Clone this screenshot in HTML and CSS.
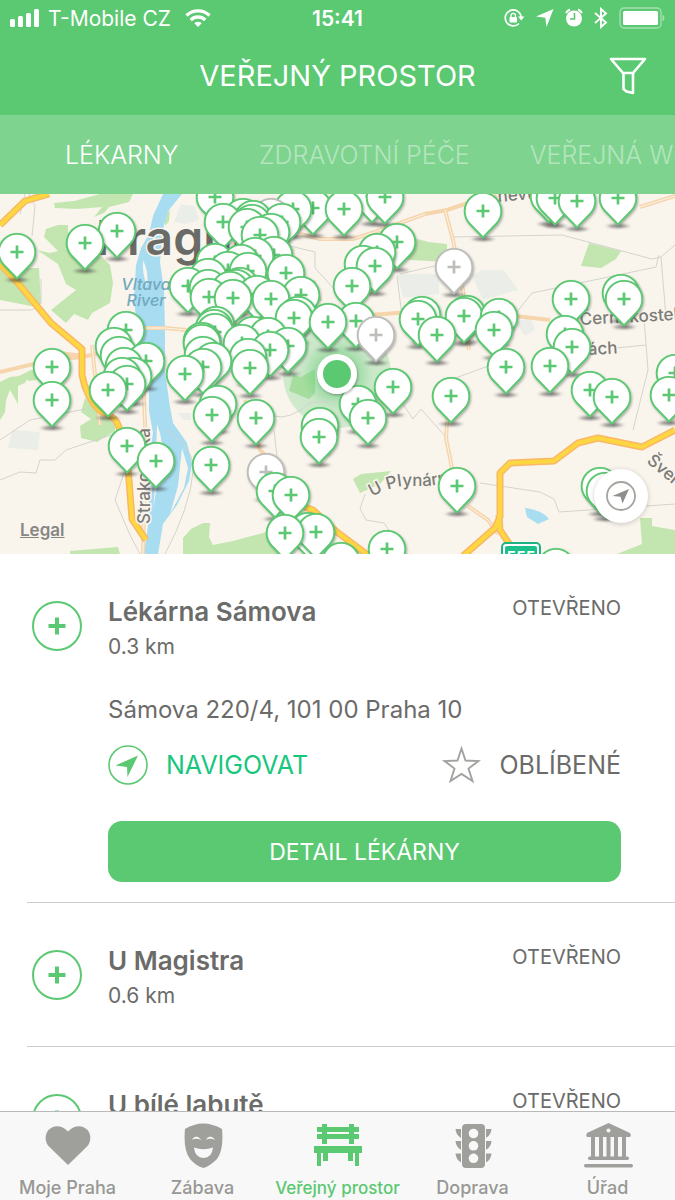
FILE: index.html
```html
<!DOCTYPE html>
<html lang="cs">
<head>
    <meta charset="UTF-8">
    <meta name="viewport" content="width=device-width, initial-scale=1.0">
    <link rel="stylesheet" href="styles.css">
    <title>Veřejný prostor</title>
</head>
<body>
    <header class="header">
        <div class="status">
            <div class="status-left">
                <svg width="30" height="20" viewBox="0 0 30 20" fill="#fff">
                    <rect x="0" y="11" width="5" height="8" rx="1.5"/>
                    <rect x="8" y="8" width="5" height="11" rx="1.5"/>
                    <rect x="16" y="5" width="5" height="14" rx="1.5"/>
                    <rect x="24" y="1" width="5" height="18" rx="1.5"/>
                </svg>
                <span>T-Mobile CZ</span>
                <svg class="wifi" width="26" height="20" viewBox="0 0 26 20" fill="none" stroke="#fff" stroke-width="3.4">
                    <path d="M1.500 7.500a16.500 16.500 0 0 1 23 0"/>
                    <path d="M5.700 12a10.500 10.500 0 0 1 14.600 0"/>
                    <path d="M13 19l-3.700-3.800a5.400 5.400 0 0 1 7.400 0z" fill="#fff" stroke="none"/>
                </svg>
            </div>
            <b class="time">15:41</b>
            <div class="status-right">
                <svg width="22" height="20" viewBox="0 0 22 20">
                    <path d="M16 15.500a8 8 0 1 1 2.200-6.500" fill="none" stroke="#fff" stroke-width="1.700"/>
                    <path d="M15 8.500h6.500l-3.300 4z" fill="#fff"/>
                    <rect x="6.500" y="9" width="7.500" height="5.500" rx="0.800" fill="#fff"/>
                    <path d="M8 9.500v-2a2.200 2.200 0 0 1 4.400 0v2" fill="none" stroke="#fff" stroke-width="1.300"/>
                </svg>
                <svg width="18" height="20" viewBox="0 0 18 20" fill="#fff"><path d="M17.500 1L10.500 19L9.300 9.700L0 8.500z"/></svg>
                <svg width="18" height="20" viewBox="0 0 18 20">
                    <circle cx="9" cy="10.500" r="8" fill="#fff"/>
                    <path d="M9.500 5v6H5" fill="none" stroke="#5bc872" stroke-width="1.600"/>
                    <path d="M1 5a9 9 0 0 1 4-3.500M13 1.500a9 9 0 0 1 4 3.500" fill="none" stroke="#fff" stroke-width="2"/>
                </svg>
                <svg width="14" height="22" viewBox="0 0 14 22" fill="none" stroke="#fff" stroke-width="1.900"><path d="M1 6l11 9.500l-5 4.500V2l5 4.500L1 16"/></svg>
                <svg width="46" height="22" viewBox="0 0 46 22">
                    <rect x="1" y="1" width="41" height="20" rx="4" fill="none" stroke="#a6e0b2" stroke-width="1.300"/>
                    <rect x="4" y="4" width="35" height="14" rx="1.500" fill="#fff"/>
                    <path d="M43.500 7.500v7q2-1 2-3.500t-2-3.500z" fill="#a6e0b2"/>
                </svg>
            </div>
        </div>
        <div class="title-bar">
            <h1 class="title">VEŘEJNÝ PROSTOR</h1>
            <button class="filter" aria-label="Filtr">
                <svg width="38" height="38" viewBox="0 0 38 38" fill="none" stroke="#fff" stroke-width="2.600" stroke-linejoin="round">
                    <path d="M2 2h34L24 16H14z"/>
                    <path d="M14.500 16v16l3 2.500l6.500 1.500V16"/>
                </svg>
            </button>
        </div>
    </header>

    <nav class="tabs">
        <a href="#" class="tab active">LÉKARNY</a>
        <a href="#" class="tab">ZDRAVOTNÍ PÉČE</a>
        <a href="#" class="tab">VEŘEJNÁ WC</a>
    </nav>

    <main class="content">
        <section class="map">
            <svg class="map-canvas" viewBox="0 194 675 360" preserveAspectRatio="xMidYMid slice">
                <defs>
                    <filter id="soft" x="-50%" y="-150%" width="200%" height="400%"><feGaussianBlur stdDeviation="2.400 1"/></filter>
                    <filter id="drop" x="-30%" y="-30%" width="160%" height="160%"><feDropShadow dx="1" dy="1.500" stdDeviation="1" flood-color="#555" flood-opacity="0.450"/></filter>
                    <radialGradient id="halo">
                        <stop offset="0.350" stop-color="#5bc872" stop-opacity="0.600"/>
                        <stop offset="0.650" stop-color="#5bc872" stop-opacity="0.300"/>
                        <stop offset="1" stop-color="#5bc872" stop-opacity="0.250"/>
                    </radialGradient>
                    <g id="pin">
                        <ellipse cx="0" cy="28" rx="10" ry="2.200" fill="#444" opacity="0.550" filter="url(#soft)"/>
                        <path d="M0 26.500L-13.500 12.500A18.300 18.300 0 1 1 13.500 12.500Z" fill="#fff" stroke="currentColor" stroke-width="1.900" filter="url(#drop)"/>
                        <path d="M-6.500 0H6.500M0-6.500V6.500" stroke="currentColor" stroke-width="2.700"/>
                    </g>
                    <path id="plynarni" d="M372 497Q392 485 412 486T450 482"/>
                </defs>

                <rect y="194" width="675" height="360" fill="#f9f5ed"/>

                <!-- parks -->
                <g fill="#c3e6b0">
                    <path d="M54 203l20-2l26-7h33l-4 8l-20 5l-5 6l-10 4l8-10l-25 2l-22-1z"/>
                    <path d="M37 250l13 3l8-2l-6-6l-8-8l2-8l12-4h10v8l30 20l12 12l3 18l-3 20l-18 10l-4 7l-14-6l-8 9l-15-13l25-20l-10-6l-8-20z"/>
                    <path d="M0 260l22 8h17l2 36l-10 2l-31-6z"/>
                    <path d="M165 216l5-7l-1 12l-4 5z"/>
                    <path d="M0 382l10-5l19-2l-4 8l-7 3v18l-8-14l-4 10l-1 12l-5 8z"/>
                    <path d="M19 376l12-6h18v8l-20 3z"/>
                    <path d="M85 398l18 15l12 8v10l-18 11l-16-4l-1-12l11-7l-10-7z"/>
                    <path d="M183 538l8-9l12-6h7l-1 14l4 8l20-4l30-8l24-10l5 31h-109z"/>
                    <path d="M70 551l48-4l2 7h-50z"/>
                    <path d="M293 375l8 2l14-8v24l-6 6l-20-8z"/>
                    <path d="M392 248l26-9l10 3l19 2v18l-36-2l-20-2z"/>
                    <path d="M589 243l32 8l-5 8l-15 9l-20-2z"/>
                    <path d="M353 479l8-5l30-3l-11 13l-20 9z"/>
                    <path d="M617 554l25-10l-2-26h12v8l23 4v24z"/>
                    <path d="M295 284l20-4l7 20l-20 13z"/>
                </g>
                <!-- built-up blocks -->
                <g fill="#ebeee8">
                    <path d="M174 222l7-18l14 2l4 14l-13 4z"/>
                    <path d="M8 448l4-18l28 2l-2 18z"/>
                    <path d="M397 274h42v20l-36 4z"/>
                    <path d="M472 276l10-6l22 0l14 20l-35 10z"/>
                    <path d="M178 413h13v7h-8z"/>
                    <path d="M515 322l16-4l4 12l-10 6z"/>
                </g>

                <circle cx="337" cy="374" r="54" fill="url(#halo)"/>

                <!-- Vltava -->
                <path fill="#a7dcf1" d="M163 194h19l-14 17l-5 18l-3 33l4 28l1 40v42l5 35l3 16l14 20l5 20l-3 18l-12 24l-14 19l-5 30h-14l4-28l1-26l-3-25l7-42l-4-22v-40l-10-30l-5-40l2-36l5-17l8-14l4-18z"/>
                <path fill="#f9f5ed" d="M143 260q6 12 4 26q-5-12-4-26zM157 424q8 20 4 40t-8 46q3-32 3-45t1-41z"/>
                <path fill="#f9f5ed" d="M182 448l6 20l-4 20l-14 26l8-28z"/>
                <path fill="#a7dcf1" d="M525 508q17 2 24 11l-11 5l-11-7z"/>

                <!-- tracks and district borders -->
                <g fill="none" stroke="#d4d3cd" stroke-width="1">
                    <path d="M20 214l5-20M32 236l3-30l-6-12M0 310h32l9-7v-24"/>
                    <path d="M0 440l30-20l30-6l25-5M0 480l20-8l16 1l4-13h15l11-10l45-15"/>
                    <path d="M125 470l-10 30l15 35l10 19M166 430q30 20 27 42q-3 35-28 82"/>
                    <path d="M290 246l25 6v16l42 46M274 416q15 5 37-14h40M274 430l4 36M450 237l112-2l90 24l9-2l14-12"/>
                    <path d="M512 318l20-25l124-26l3-12M661 257l5 60M644 318l4 52l-15 60M450 380l60-22M616 348l30-3"/>
                    <path d="M480 483l60 9l14 7l5 13l116-8M365 494l-5 15l6 11l18 3l10 14M403 404l10 15l8-10l24 27"/>
                    <path d="M397 276l5 40M400 274l60-14M340 194l-15 10"/>
                </g>
                <!-- streets -->
                <g fill="none" stroke="#f7d5ac" stroke-width="4">
                    <path d="M0 372l50-12l32-3l20-4M50 352l34 4M92 345l8 80M140 328h25l22 2"/>
                    <path d="M143 380l3 64l-3 110M300 234l20 5h33l22-7l50-18l22-4l18-6l40-10M445 210l8 30l10 50l6 60M370 315l68-5M515 316l35 4"/>
                    <path d="M448 410l-2 28l6 30M468 506l20 14l10 14M245 400l15 50l12 12M640 207l35-11"/>
                </g>
                <g fill="none" stroke="#f9f5ed" stroke-width="1">
                    <path d="M143 380l3 64l-3 110M300 234l20 5h33l22-7l50-18M445 210l8 30l10 50l6 60M448 410l-2 28l6 30M468 506l20 14l10 14M92 345l8 80M140 328h25l22 2M640 207l35-11"/>
                </g>
                <!-- motorways -->
                <g fill="none" stroke-linejoin="round">
                    <path stroke="#fab765" stroke-width="7" d="M0 225l25-24l24-7M0 264l17 18l34 41l31 26v26q4 22 18 36q16 6 18 14q9 18 10 42l4 52l14 21M285 500l28 10l24 22l32 24M675 430L642 447L598 438L578 443L554 461L510 463L500 473V517L495 528L463 556M499 515L500 530L512 548"/>
                    <path stroke="#fdd742" stroke-width="4" d="M0 225l25-24l24-7M0 264l17 18l34 41l31 26v26q4 22 18 36q16 6 18 14q9 18 10 42l4 52l14 21M285 500l28 10l24 22l32 24M675 430L642 447L598 438L578 443L554 461L510 463L500 473V517L495 528L463 556M499 515L500 530L512 548"/>
                </g>

                <g class="map-label">
                    <text class="city" x="96" y="255">Prague</text>
                    <text class="water" x="146" y="290">Vltava</text>
                    <text class="water" x="146" y="306">River</text>
                    <text x="498" y="202" transform="rotate(-5 498 202)">nevu</text>
                    <text x="580" y="325" transform="rotate(-3 580 325)">Černokostelecká</text>
                    <text x="588" y="355" transform="rotate(-3 588 355)">ách</text>
                    <text x="150" y="524" transform="rotate(-90 150 524)">Strakonická</text>
                    <text x="646" y="462" transform="rotate(40 646 462)">Švehlova</text>
                    <text><textPath href="#plynarni">U Plynární</textPath></text>
                </g>

                <rect x="502" y="543" width="38" height="26" rx="4" fill="#fff" stroke="#1db384" stroke-width="2"/>
                <rect x="505" y="546" width="32" height="24" rx="2" fill="#1cc08b"/>
                <text class="road-no" x="521" y="562">555</text>

                <g id="pins"></g>

                <circle cx="337" cy="374" r="20" fill="#fff" filter="url(#drop)"/>
                <circle cx="337" cy="374" r="14" fill="#5bc872"/>
            </svg>
            <a href="#" class="legal">Legal</a>
            <button class="locate" aria-label="Moje poloha">
                <svg width="30" height="30" viewBox="0 0 30 30">
                    <circle cx="15" cy="15" r="14" fill="none" stroke="#a3a39f" stroke-width="1.800"/>
                    <path d="M23 8L16.500 22.500L14.500 15.800L6.500 15z" fill="#8e8e8a"/>
                </svg>
            </button>
        </section>

        <ul class="list">
            <li class="item open">
                <svg class="item-icon" width="50" height="50" viewBox="0 0 50 50"><circle cx="25" cy="25" r="24"/><path d="M16.500 25h17M25 16.500v17"/></svg>
                <div class="item-body">
                    <div class="item-head">
                        <h2 class="name">Lékárna Sámova</h2>
                        <span class="state">OTEVŘENO</span>
                    </div>
                    <p class="distance">0.3 km</p>
                    <p class="address">Sámova 220/4, 101 00 Praha 10</p>
                    <div class="actions">
                        <button class="action navigate">
                            <svg width="40" height="40" viewBox="0 0 40 40">
                                <circle cx="20" cy="20" r="19" fill="none" stroke="#5bc872" stroke-width="1.600"/>
                                <path d="M30 10.500L19.500 32L19 22L7.500 20.500z" fill="#5bc872"/>
                            </svg>
                            NAVIGOVAT
                        </button>
                        <button class="action">
                            <svg width="40" height="40" viewBox="0 0 40 40" fill="none" stroke="#a2a29e" stroke-width="1.900">
                                <path d="M20.500 3.500L24.500 15.500L37.500 16L27.500 23.500L31.500 36L20.500 29L9.500 36L13.500 23.500L3.500 16L16.500 15.500z"/>
                            </svg>
                            OBLÍBENÉ
                        </button>
                    </div>
                    <button class="detail">DETAIL LÉKÁRNY</button>
                </div>
            </li>
            <li class="item">
                <svg class="item-icon" width="50" height="50" viewBox="0 0 50 50"><circle cx="25" cy="25" r="24"/><path d="M16.500 25h17M25 16.500v17"/></svg>
                <div class="item-body">
                    <div class="item-head">
                        <h2 class="name">U Magistra</h2>
                        <span class="state">OTEVŘENO</span>
                    </div>
                    <p class="distance">0.6 km</p>
                </div>
            </li>
            <li class="item">
                <svg class="item-icon" width="50" height="50" viewBox="0 0 50 50"><circle cx="25" cy="25" r="24"/><path d="M16.500 25h17M25 16.500v17"/></svg>
                <div class="item-body">
                    <div class="item-head">
                        <h2 class="name">U bílé labutě</h2>
                        <span class="state">OTEVŘENO</span>
                    </div>
                </div>
            </li>
        </ul>
    </main>

    <nav class="bottom-nav">
        <a href="#" class="nav-link">
            <svg width="50" height="46" viewBox="0 0 50 46"><path d="M25 42L6 23.500C1.500 19 1.500 11 6 6.500C11 1.800 19 1.800 25 8.500C31 1.800 39 1.800 44 6.500C48.500 11 48.500 19 44 23.500z"/></svg>
            Moje Praha
        </a>
        <a href="#" class="nav-link">
            <svg width="50" height="46" viewBox="0 0 50 46">
                <path fill-rule="evenodd" d="M7 6Q25-5 44 6Q46 26 39 36Q32 43 25.500 45Q18 43 12 36Q5 26 7 6zM13.500 17Q18 10 23.500 17Q18 14.500 13.500 17zM27.500 17Q32 10 37.500 17Q32 14.500 27.500 17zM16 24.500Q25.500 28 35 24.500Q34 35 25.500 35Q17 35 16 24.500z"/>
            </svg>
            Zábava
        </a>
        <a href="#" class="nav-link current">
            <svg width="50" height="46" viewBox="0 0 50 46"><path d="M9 1h5v3h22V1h5v3h5v5h-5v2h5v5h-5v5h-5v-5H14v5H9v-5H4v-5h5V9H4V4h5zM14 9v2h22V9zM1 23h48v7h-3v13h-4V30h-2v8h-5v-8H15v8h-5v-8H8v13H4V30H1z"/></svg>
            Veřejný prostor
        </a>
        <a href="#" class="nav-link">
            <svg width="50" height="46" viewBox="0 0 50 46">
                <rect x="14" y="1" width="23" height="44" rx="4"/>
                <path d="M7.500 6H13v9Q8 12 7.500 6zM7.500 18H13v9Q8 24 7.500 18zM7.500 30.500H13v9Q8 36.500 7.500 30.500zM43.500 6H38v9Q43 12 43.500 6zM43.500 18H38v9Q43 24 43.500 18zM43.500 30.500H38v9Q43 36.500 43.500 30.500z"/>
                <g fill="#f8f8f8"><circle cx="25.500" cy="10.500" r="4.800"/><circle cx="25.500" cy="22.800" r="4.800"/><circle cx="25.500" cy="35.300" r="4.800"/></g>
            </svg>
            Doprava
        </a>
        <a href="#" class="nav-link">
            <svg width="50" height="46" viewBox="0 0 50 46">
                <path d="M25.500 0L47 10q2 4-1 4H5q-3 0-1-4z"/>
                <path d="M8 14h4v20H8zM16 14h4v20h-4zM23.500 14h4v20h-4zM31 14h4v20h-4zM39 14h4v20h-4z"/>
                <rect x="5" y="33.500" width="41" height="3.500" rx="1.700"/>
                <rect x="1" y="41" width="49" height="3.500" rx="1.700"/>
                <circle cx="25.500" cy="7.500" r="2" fill="#f8f8f8"/>
            </svg>
            Úřad
        </a>
    </nav>

    <script>
        // x, y, closed
        var pins = [
            [17, 252], [85, 243], [117, 231], [215, 197], [223, 222], [243, 217], [253, 219], [252, 223], [247, 227],
            [260, 235], [271, 232], [271, 217, true], [282, 222], [293, 209], [313, 208], [344, 209], [372, 196], [385, 197],
            [397, 242], [377, 252], [363, 264], [375, 266], [352, 286], [274, 255], [255, 256], [215, 262], [208, 277],
            [228, 270], [241, 263], [248, 271], [286, 273], [188, 286], [208, 288], [209, 297], [240, 286], [236, 288],
            [230, 290], [233, 298], [257, 294], [271, 299], [301, 295], [298, 315], [294, 318], [328, 322], [356, 321],
            [376, 335, true], [253, 335], [268, 336], [242, 343], [288, 346], [270, 350], [248, 357], [250, 368],
            [216, 325], [214, 328], [215, 332], [202, 341], [202, 343], [203, 355], [213, 361], [203, 367], [185, 374],
            [126, 330], [114, 346], [119, 355], [124, 366], [146, 361], [133, 376], [122, 376], [127, 384], [108, 390],
            [52, 367], [52, 400], [127, 446], [156, 461], [218, 404], [212, 415], [211, 465], [256, 418], [320, 426],
            [319, 437], [358, 404], [368, 418], [393, 387], [422, 315], [418, 319], [437, 335], [467, 314], [464, 316],
            [454, 267, true], [499, 317], [494, 330], [506, 367], [550, 366], [451, 396], [483, 211], [549, 196],
            [555, 198], [577, 201], [618, 198], [571, 299], [621, 293], [624, 299], [565, 334], [572, 347], [590, 390],
            [612, 397], [675, 373], [669, 395], [266, 472, true], [275, 491], [291, 495], [308, 531], [316, 532],
            [285, 533], [341, 561], [387, 549], [457, 486], [600, 486], [605, 491], [556, 567]
        ];

        // southern pins lie over the northern ones
        pins.sort(function(a, b){
            return a[1] - b[1];
        });

        var layer = document.getElementById("pins");

        pins.forEach(function(pin){
            var use = document.createElementNS("http://www.w3.org/2000/svg", "use");
            use.setAttribute("href", "#pin");
            use.setAttribute("x", pin[0]);
            use.setAttribute("y", pin[1]);
            use.setAttribute("class", pin[2] ? "pin closed" : "pin");
            layer.appendChild(use);
        });
    </script>
</body>
</html>
```
FILE: styles.css
```css
*{
    box-sizing: border-box;
}

body{
    margin: 0;
    height: 100vh;
    display: flex;
    flex-direction: column;
    background-color: #fff;
    color: #6b6b69;
    font-family: "Inter", sans-serif;
}

button{
    font-family: inherit;
    border: none;
    background: none;
    padding: 0;
    color: inherit;
    cursor: pointer;
}

a{
    color: inherit;
    text-decoration: none;
}

svg{
    display: block;
    flex: none;
}

h1, h2, p, ul{
    margin: 0;
    padding: 0;
}

/* header */

.header{
    flex: none;
    background-color: #5bc872;
    color: #fff;
}

.status{
    display: grid;
    grid-template-columns: 1fr auto 1fr;
    align-items: center;
    height: 36px;
    padding: 0 10px;
    font-size: 21px;
}

.status-left, .status-right{
    display: flex;
    align-items: center;
}

.status-left{
    gap: 8px;
}

.wifi{
    margin-left: 6px;
}

.time{
    font-size: 21px;
    font-weight: 600;
}

.status-right{
    justify-content: flex-end;
    gap: 11px;
}

.title-bar{
    display: grid;
    grid-template-columns: 1fr auto 1fr;
    align-items: center;
    height: 79px;
    padding: 0 28px;
}

.title{
    grid-column: 2;
    font-size: 29px;
    font-weight: 400;
}

.filter{
    justify-self: end;
}

.tabs{
    flex: none;
    display: flex;
    align-items: center;
    gap: 60px;
    height: 79px;
    padding-left: 65px;
    overflow: hidden;
    background-color: #7ed48f;
    font-size: 25px;
    font-weight: 300;
    white-space: nowrap;
}

.tab{
    flex: none;
    min-width: 134px;
    color: #b5e5be;
}

.tab.active{
    color: #fff;
}

/* map */

.content{
    flex: 1;
    min-height: 0;
    overflow-y: auto;
    scrollbar-width: none;
}

.map{
    position: relative;
}

.map-canvas{
    width: 100%;
    aspect-ratio: 15 / 8;
}

.map-label{
    font-size: 17px;
    font-weight: 500;
    fill: #7b7b78;
    stroke: #f9f5ed;
    stroke-width: 3px;
    paint-order: stroke;
}

.city{
    font-size: 48px;
    font-weight: 600;
    fill: #6a6a67;
}

.water{
    font-size: 16px;
    font-style: italic;
    fill: #72a9bd;
    stroke: none;
    text-anchor: middle;
}

.road-no{
    font-size: 15px;
    font-weight: 700;
    fill: #fff;
    text-anchor: middle;
}

.pin{
    color: #5bc872;
}

.pin.closed{
    color: #bdbdba;
}

.legal{
    position: absolute;
    left: 20px;
    bottom: 14px;
    font-size: 17px;
    font-weight: 600;
    color: #868683;
    text-decoration: underline;
}

.locate{
    position: absolute;
    right: 27px;
    bottom: 31px;
    display: grid;
    place-items: center;
    width: 54px;
    height: 54px;
    border-radius: 50%;
    background-color: #fff;
    box-shadow: 0 1px 5px rgba(0, 0, 0, 0.2);
}

/* list */

.list{
    list-style: none;
}

.item{
    display: flex;
    gap: 26px;
    margin-left: 27px;
    padding: 41px 54px 32px 5px;
    border-bottom: 1px solid #cdcdcb;
}

.item.open{
    padding-bottom: 20px;
}

.item-icon{
    margin-top: 6px;
    fill: none;
    stroke: #5bc872;
    stroke-width: 2px;
}

.item-icon path{
    stroke-width: 4px;
}

.item-body{
    flex: 1;
}

.item-head{
    display: flex;
    justify-content: space-between;
}

.name{
    font-size: 26px;
    font-weight: 600;
    line-height: 34px;
}

.state{
    font-size: 20px;
    line-height: 26px;
}

.distance{
    font-size: 21px;
    line-height: 36px;
}

.address{
    margin-top: 30px;
    font-size: 24px;
    line-height: 30px;
}

.actions{
    display: flex;
    justify-content: space-between;
    margin-top: 20px;
}

.action{
    display: flex;
    align-items: center;
    gap: 18px;
    font-size: 25px;
}

.navigate{
    color: #17c67d;
}

.detail{
    display: block;
    width: 100%;
    height: 61px;
    margin-top: 36px;
    border-radius: 14px;
    background-color: #5bc872;
    color: #fff;
    font-size: 23px;
}

/* bottom bar */

.bottom-nav{
    flex: none;
    display: grid;
    grid-template-columns: repeat(5, 1fr);
    border-top: 1px solid #b9b9b9;
    background-color: #f8f8f8;
}

.nav-link{
    display: flex;
    flex-direction: column;
    align-items: center;
    gap: 8px;
    padding: 11px 0 1px;
    font-size: 18px;
    font-weight: 500;
    line-height: 22px;
    color: #979794;
    fill: #9f9f9c;
    white-space: nowrap;
}

.nav-link.current{
    font-size: 17px;
    color: #5bc872;
    fill: #5bc872;
}
```
